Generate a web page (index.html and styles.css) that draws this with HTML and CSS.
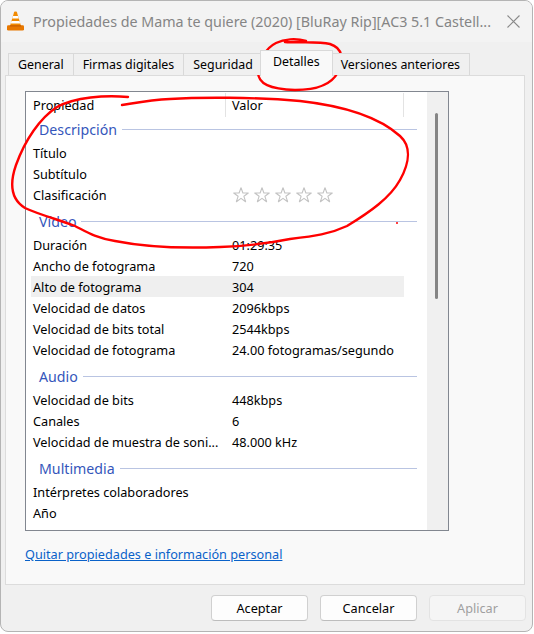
FILE: index.html
```html
<!DOCTYPE html>
<html lang="es">
<head>
<meta charset="utf-8">
<title>Propiedades</title>
<link rel="stylesheet" href="styles.css">
</head>
<body>
<div class="window">
  <div class="titlebar">
    <svg class="vlc" width="17" height="20" viewBox="0 0 17 20">
      <path d="M7.2,0.8 Q8.5,0 9.8,0.8 L14,15 H3 Z" fill="#f28a00"/>
      <path d="M5.96,5 L11.04,5 L11.78,7.5 L5.22,7.5 Z" fill="#ffffff"/>
      <path d="M4.48,10 L12.52,10 L13.26,12.5 L3.74,12.5 Z" fill="#ffffff"/>
      <path d="M1.2,14.2 H15.8 Q17,14.2 17,15.6 V18.2 Q17,19.6 15.6,19.6 H1.4 Q0,19.6 0,18.2 V15.6 Q0,14.2 1.2,14.2 Z" fill="#e87800"/>
      <path d="M3,14.2 H14 L14.3,15.4 H2.7 Z" fill="#c85f00"/>
    </svg>
    <span class="title">Propiedades de Mama te quiere (2020) [BluRay Rip][AC3 5.1 Castell...</span>
    <svg class="close" width="13" height="13" viewBox="0 0 13 13">
      <path d="M0.5,0.5 L12.5,12.5 M12.5,0.5 L0.5,12.5" stroke="#8a8a8a" stroke-width="1.1" fill="none"/>
    </svg>
  </div>

  <div class="tabs">
    <div class="tab">General</div>
    <div class="tab">Firmas digitales</div>
    <div class="tab">Seguridad</div>
    <div class="tab active">Detalles</div>
    <div class="tab">Versiones anteriores</div>
  </div>

  <div class="panel">
    <div class="list">
      <div class="list-body">
        <div class="header">
          <div class="hcol h1">Propiedad</div>
          <div class="hcol h2">Valor</div>
          <div class="hcol h3"></div>
        </div>

        <div class="group first"><span class="glabel">Descripción</span><span class="gline"></span></div>
        <div class="row"><span>Título</span><span></span></div>
        <div class="row"><span>Subtítulo</span><span></span></div>
        <div class="row"><span>Clasificación</span>
          <span class="stars">
            <svg width="101" height="16" viewBox="0 0 101 16">
              <g fill="none" stroke="#c3c3c3" stroke-width="1.1" stroke-linejoin="round">
                <path d="M8,0.8 L9.9,6 L15.3,6 L10.9,9.3 L12.6,14.7 L8,11.4 L3.4,14.7 L5.1,9.3 L0.7,6 L6.1,6 Z"/>
                <path d="M29,0.8 L30.9,6 L36.3,6 L31.9,9.3 L33.6,14.7 L29,11.4 L24.4,14.7 L26.1,9.3 L21.7,6 L27.1,6 Z"/>
                <path d="M50,0.8 L51.9,6 L57.3,6 L52.9,9.3 L54.6,14.7 L50,11.4 L45.4,14.7 L47.1,9.3 L42.7,6 L48.1,6 Z"/>
                <path d="M71,0.8 L72.9,6 L78.3,6 L73.9,9.3 L75.6,14.7 L71,11.4 L66.4,14.7 L68.1,9.3 L63.7,6 L69.1,6 Z"/>
                <path d="M92,0.8 L93.9,6 L99.3,6 L94.9,9.3 L96.6,14.7 L92,11.4 L87.4,14.7 L89.1,9.3 L84.7,6 L90.1,6 Z"/>
              </g>
            </svg>
          </span>
        </div>

        <div class="group"><span class="glabel">Vídeo</span><span class="gline"></span></div>
        <div class="row"><span>Duración</span><span>01:29:35</span></div>
        <div class="row"><span>Ancho de fotograma</span><span>720</span></div>
        <div class="row hover"><span>Alto de fotograma</span><span>304</span></div>
        <div class="row"><span>Velocidad de datos</span><span>2096kbps</span></div>
        <div class="row"><span>Velocidad de bits total</span><span>2544kbps</span></div>
        <div class="row"><span>Velocidad de fotograma</span><span>24.00 fotogramas/segundo</span></div>

        <div class="group"><span class="glabel">Audio</span><span class="gline"></span></div>
        <div class="row"><span>Velocidad de bits</span><span>448kbps</span></div>
        <div class="row"><span>Canales</span><span>6</span></div>
        <div class="row"><span>Velocidad de muestra de soni...</span><span>48.000 kHz</span></div>

        <div class="group"><span class="glabel">Multimedia</span><span class="gline"></span></div>
        <div class="row"><span>Intérpretes colaboradores</span><span></span></div>
        <div class="row"><span>Año</span><span></span></div>
      </div>
      <div class="scrollbar"><div class="thumb"></div></div>
    </div>
    <a class="link" href="#">Quitar propiedades e información personal</a>
  </div>

  <div class="buttons">
    <button class="btn">Aceptar</button>
    <button class="btn">Cancelar</button>
    <button class="btn disabled">Aplicar</button>
  </div>
</div>

<svg class="annot" width="534" height="634" viewBox="0 0 534 634">
  <g fill="none" stroke="#ff0000" stroke-width="2.4" stroke-linecap="round" stroke-linejoin="round">
    <path d="M306,41 C296,38 284,39 276,43 C266,48 259,60 258,72 C258,84 270,89 295,90 C318,90 332,84 338,72 C344,60 343,48 330,44 C318,41 300,43 285,42"/>
    <path d="M128,97 C105,95 75,97 57,107 C40,118 25,140 16,165 C9,185 12,200 25,208 C40,215 60,220 75,226 C85,231 95,238 115,241 C140,246 170,249 220,247 C250,246 270,243 290,239 C315,236 330,234 347,226 C370,212 390,198 400,180 C410,162 411,146 400,136 C380,118 345,106 300,101 C255,97 200,97 170,99 C150,100 135,103 122,105"/>
  </g>
  <circle cx="397" cy="223" r="1" fill="#ff0000"/>
</svg>
</body>
</html>
```

FILE: styles.css
```css
html, body {
  margin: 0;
  padding: 0;
  background: #ffffff;
}

body {
  position: relative;
  width: 534px;
  height: 634px;
  font-family: "Noto Sans", "Liberation Sans", sans-serif;
  font-size: 12.7px;
  color: #000;
}

.window {
  width: 533px;
  height: 632px;
  box-sizing: border-box;
  border: 1px solid #b4b4b4;
  border-radius: 8px;
  background: #f0f0f0;
  display: flex;
  flex-direction: column;
  overflow: hidden;
}

.titlebar {
  height: 41px;
  flex: none;
  display: flex;
  align-items: center;
  padding-left: 6px;
  background: #f3f3f3;
}

.vlc {
  flex: none;
  margin-top: -2px;
}

.title {
  margin-left: 9px;
  font-size: 14.3px;
  color: #858585;
  white-space: nowrap;
}

.close {
  flex: none;
  margin-left: auto;
  margin-right: 12px;
}

.tabs {
  flex: none;
  display: flex;
  align-items: flex-end;
  height: 25px;
  margin-top: 8px;
  padding-left: 7px;
  position: relative;
  z-index: 1;
  font-size: 12.4px;
}

.tab {
  height: 22px;
  box-sizing: border-box;
  padding: 0 9px;
  line-height: 22px;
  border: 1px solid #d9d9d9;
  border-bottom: none;
  margin-left: -1px;
  background: #f0f0f0;
  white-space: nowrap;
}

.tab:first-child {
  margin-left: 0;
}

.tab.active {
  height: 26px;
  margin: 0 -2px -1px -3px;
  padding: 0 12px;
  line-height: 21px;
  background: #f9f9f9;
  position: relative;
  z-index: 2;
}

.tab.active + .tab {
  margin-left: 0;
}

.panel {
  flex: none;
  height: 510px;
  box-sizing: border-box;
  margin: 0 7px 0 4px;
  border: 1px solid #dcdcdc;
  background: #f9f9f9;
  padding: 15px 0 0 19px;
}

.list {
  width: 424px;
  height: 440px;
  box-sizing: border-box;
  border: 1px solid #828790;
  background: #ffffff;
  display: flex;
}

.list-body {
  flex: 1;
  overflow: hidden;
}

.header {
  display: flex;
  height: 25px;
}

.hcol {
  box-sizing: border-box;
}

.h1 {
  width: 200px;
  padding-left: 7px;
  border-right: 1px solid #e3e3e3;
  margin-top: 1px;
  line-height: 24px;
}

.h2 {
  width: 178px;
  padding-left: 6px;
  border-right: 1px solid #e3e3e3;
  margin-top: 1px;
  line-height: 24px;
}

.h3 {
  flex: 1;
}

.group {
  display: flex;
  align-items: center;
  height: 21px;
  padding: 6px 10px 2px 13px;
}

.group.first {
  padding-top: 2px;
}

.glabel {
  font-size: 14.2px;
  color: #3556bb;
  line-height: 21px;
  white-space: nowrap;
}

.gline {
  flex: 1;
  height: 1px;
  margin-left: 5px;
  margin-top: -1px;
  background: #b9c4e2;
}

.row {
  display: grid;
  grid-template-columns: 201px 1fr;
  width: 373px;
  height: 20px;
  padding-top: 1px;
  margin-left: 5px;
  line-height: 21px;
  white-space: nowrap;
}

.row > span:first-child {
  padding-left: 2px;
  overflow: hidden;
}

.row.hover {
  background: #efefef;
}

.stars {
  display: flex;
  align-items: center;
  padding-left: 1px;
  margin-top: -1px;
}

.scrollbar {
  flex: none;
  width: 21px;
  background: #f0f0f0;
  box-sizing: border-box;
  padding: 21px 0 0 8px;
}

.thumb {
  width: 3px;
  height: 186px;
  border-radius: 2px;
  background: #858585;
}

.link {
  display: block;
  width: fit-content;
  margin-top: 14px;
  color: #0a62c9;
  text-decoration: underline;
  line-height: 18px;
}

.buttons {
  flex: none;
  display: flex;
  justify-content: flex-end;
  gap: 12px;
  margin-top: 10px;
  padding-right: 6px;
}

.btn {
  width: 97px;
  height: 26px;
  box-sizing: border-box;
  border: 1px solid #d0d0d0;
  border-bottom-color: #bdbdbd;
  border-radius: 4px;
  background: #fdfdfd;
  font-family: inherit;
  font-size: 12.7px;
  color: #000;
  padding: 0;
}

.btn.disabled {
  background: #f5f5f5;
  border-color: #e3e3e3;
  color: #9f9f9f;
}

.annot {
  position: absolute;
  left: 0;
  top: 0;
  pointer-events: none;
}
```
